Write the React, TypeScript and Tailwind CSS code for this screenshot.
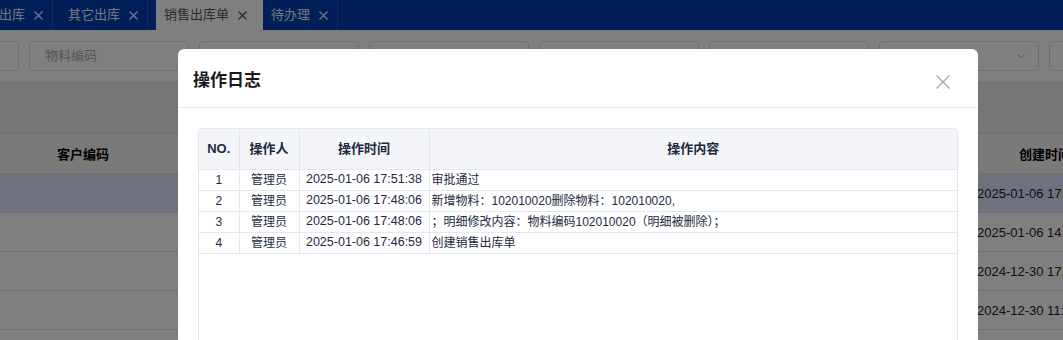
import { ChevronDown } from "lucide-react"

const font = "font-['Liberation_Sans','Noto_Sans_CJK_SC',sans-serif]"

const logs = [
  { no: 1, user: "管理员", time: "2025-01-06 17:51:38", text: "审批通过" },
  { no: 2, user: "管理员", time: "2025-01-06 17:48:06", text: "新增物料：102010020删除物料：102010020," },
  { no: 3, user: "管理员", time: "2025-01-06 17:48:06", text: "；明细修改内容：物料编码102010020（明细被删除）；" },
  { no: 4, user: "管理员", time: "2025-01-06 17:46:59", text: "创建销售出库单" },
]

const created = ["2025-01-06 17:46:59", "2025-01-06 14:12:20", "2024-12-30 17:45:10", "2024-12-30 11:28:33"]

function Cross({ size, stroke, className }: { size: number; stroke: number; className?: string }) {
  return (
    <svg width={size} height={size} viewBox={`0 0 ${size} ${size}`} className={className}>
      <path
        d={`M0.5 0.5L${size - 0.5} ${size - 0.5}M${size - 0.5} 0.5L0.5 ${size - 0.5}`}
        stroke="currentColor"
        strokeWidth={stroke}
        fill="none"
      />
    </svg>
  )
}

function Tab({ label, active, pl, pr }: { label: string; active?: boolean; pl: string; pr: string }) {
  return (
    <div
      className={`flex items-center h-full ${pl} ${pr} text-[13px] ${
        active ? "bg-white text-[#555]" : "text-[#e8edfa] border-r border-[#2456c0]"
      }`}
    >
      <span className="whitespace-nowrap">{label}</span>
      <Cross size={9} stroke={1.3} className="ml-[9px] mr-[1px]" />
    </div>
  )
}

function Filter({ placeholder, select }: { placeholder?: string; select?: boolean }) {
  return (
    <div className="w-[160px] h-[30px] shrink-0 rounded-[4px] border border-[#dcdfe6] flex items-center justify-between px-[15px] text-[13px] text-[#a8abb2]">
      <span>{placeholder}</span>
      {select && <ChevronDown className="w-[14px] h-[14px] text-[#a8abb2] -mr-[5px]" strokeWidth={1.5} />}
    </div>
  )
}

export default function App() {
  return (
    <div className={`relative h-[340px] w-[1063px] overflow-hidden bg-white ${font}`}>
      {/* Tabs */}
      <div className="h-[30px] bg-[#003eb0] flex items-center overflow-hidden">
        <div className="-ml-[1px] flex h-full">
          <Tab label="出库" pl="pl-0" pr="pr-[8px]" />
          <Tab label="其它出库" pl="pl-[15px]" pr="pr-[8px]" />
          <div className="w-[8px]" />
          <Tab label="销售出库单" active pl="pl-[8px]" pr="pr-[15px]" />
          <Tab label="待办理" pl="pl-[8px]" pr="pr-[8px]" />
        </div>
      </div>

      {/* Filters */}
      <div className="h-[52px] flex items-center gap-[10px] -ml-[141px]">
        <Filter />
        <Filter placeholder="物料编码" />
        <Filter />
        <Filter />
        <Filter />
        <Filter />
        <Filter select />
        <Filter />
      </div>

      {/* Toolbar */}
      <div className="h-[52px] bg-[#ededed] border-t border-b border-[#e0e0e0]" />

      {/* List table */}
      <div className="flex">
        <div className="w-[166px] shrink-0">
          <div className="h-[40px] bg-[#f4f4f4] border-b border-[#e0e0e0] flex items-center justify-center pt-[2px] text-[13px] font-bold text-black">
            客户编码
          </div>
          {created.map((_, i) => (
            <div key={i} className={`h-[39px] border-b border-[#e0e0e0] ${i === 0 ? "bg-[#dde4fc]" : ""}`} />
          ))}
        </div>
        <div className="flex-1">
          <div className="h-[40px] bg-[#f4f4f4] border-b border-[#e0e0e0]" />
          {created.map((_, i) => (
            <div key={i} className={`h-[39px] border-b border-[#e0e0e0] ${i === 0 ? "bg-[#dde4fc]" : ""}`} />
          ))}
        </div>
        <div className="w-[120px] shrink-0 -mr-[34px]">
          <div className="h-[40px] bg-[#f4f4f4] border-b border-[#e0e0e0] flex items-center pl-[42px] pt-[2px] text-[13px] font-bold text-black whitespace-nowrap">
            创建时间
          </div>
          {created.map((t, i) => (
            <div
              key={i}
              className={`h-[39px] border-b border-[#e0e0e0] flex items-center pt-[2px] text-[13px] text-[#222] whitespace-nowrap ${
                i === 0 ? "bg-[#dde4fc]" : ""
              }`}
            >
              {t}
            </div>
          ))}
        </div>
      </div>

      {/* Mask */}
      <div className="absolute inset-0 bg-black/50" />

      {/* Dialog */}
      <div className="absolute left-[178px] top-[49px] w-[800px] h-[320px] bg-white rounded-t-[6px]">
        <div className="h-[59px] border-b border-[#e4e7ed] flex items-center justify-between pl-[15px] pr-[28px]">
          <span className="text-[17px] font-bold text-[#1a1a1a] pt-[6px]">操作日志</span>
          <Cross size={14} stroke={1.3} className="text-[#a3a7ae] mt-[8px]" />
        </div>
        <div className="px-[20px] pt-[20px]">
          <div className="h-[260px] border border-[#e3e7ee] rounded-t-[4px] overflow-hidden">
            <table className="w-full border-collapse text-[#1d2b3f] table-fixed">
              <colgroup>
                <col className="w-[40px]" />
                <col className="w-[60px]" />
                <col className="w-[130px]" />
                <col />
              </colgroup>
              <thead>
                <tr className="h-[40px] bg-[#f3f5f9] text-[13px] font-bold">
                  <th className="border-r border-b border-[#e3e7ee]">NO.</th>
                  <th className="border-r border-b border-[#e3e7ee]">操作人</th>
                  <th className="border-r border-b border-[#e3e7ee]">操作时间</th>
                  <th className="border-b border-[#e3e7ee]">操作内容</th>
                </tr>
              </thead>
              <tbody className="text-[12px]">
                {logs.map((r) => (
                  <tr key={r.no} className="h-[21px]">
                    <td className="border-r border-b border-[#e3e7ee] text-center">{r.no}</td>
                    <td className="border-r border-b border-[#e3e7ee] text-center">{r.user}</td>
                    <td className="border-r border-b border-[#e3e7ee] text-center whitespace-nowrap text-[12.5px]">{r.time}</td>
                    <td className="border-b border-[#e3e7ee] pl-[2px] whitespace-nowrap">{r.text}</td>
                  </tr>
                ))}
              </tbody>
            </table>
          </div>
        </div>
      </div>
    </div>
  )
}
